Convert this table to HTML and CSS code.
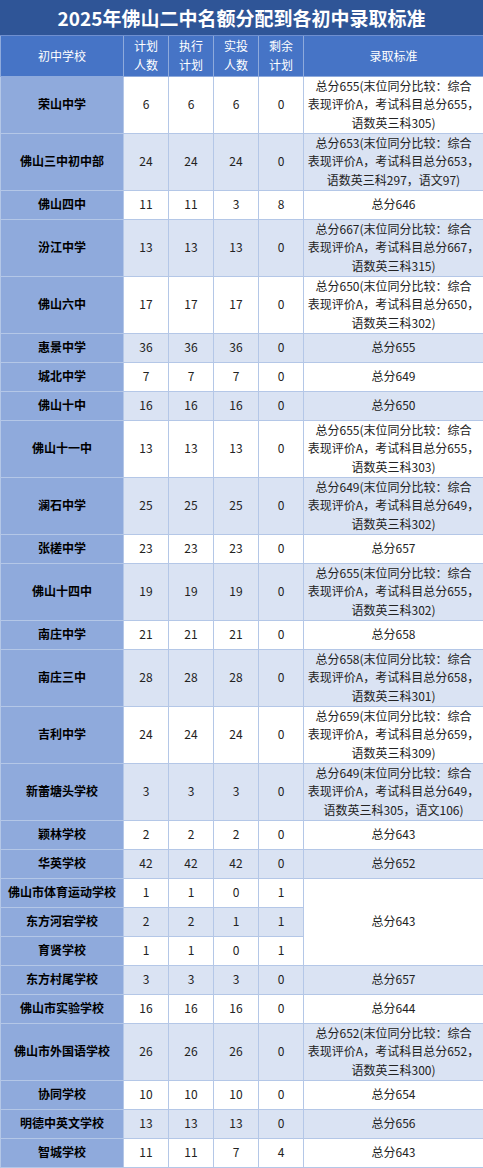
FILE: index.html
```html
<!DOCTYPE html>
<html lang="zh-CN">
<head>
<meta charset="utf-8">
<title>2025年佛山二中名额分配到各初中录取标准</title>
<link rel="stylesheet" href="styles.css">
</head>
<body>
<div class="sheet">
  <div class="title">2025年佛山二中名额分配到各初中录取标准</div>
  <table class="grid">
    <colgroup>
      <col class="c-school"><col class="c-num"><col class="c-num"><col class="c-num"><col class="c-num"><col class="c-rule">
    </colgroup>
    <thead>
      <tr class="head">
        <th>初中学校</th><th>计划<br>人数</th><th>执行<br>计划</th><th>实投<br>人数</th><th>剩余<br>计划</th><th>录取标准</th>
      </tr>
    </thead>
    <tbody>
      <tr class="r3 w"><th>荣山中学</th><td>6</td><td>6</td><td>6</td><td>0</td><td class="rule">总分655(末位同分比较：综合<br>表现评价A，考试科目总分655，<br>语数英三科305)</td></tr>
      <tr class="r3 b"><th>佛山三中初中部</th><td>24</td><td>24</td><td>24</td><td>0</td><td class="rule">总分653(末位同分比较：综合<br>表现评价A，考试科目总分653，<br>语数英三科297，语文97)</td></tr>
      <tr class="r1 w"><th>佛山四中</th><td>11</td><td>11</td><td>3</td><td>8</td><td class="rule">总分646</td></tr>
      <tr class="r3 b"><th>汾江中学</th><td>13</td><td>13</td><td>13</td><td>0</td><td class="rule">总分667(末位同分比较：综合<br>表现评价A，考试科目总分667，<br>语数英三科315)</td></tr>
      <tr class="r3 w"><th>佛山六中</th><td>17</td><td>17</td><td>17</td><td>0</td><td class="rule">总分650(末位同分比较：综合<br>表现评价A，考试科目总分650，<br>语数英三科302)</td></tr>
      <tr class="r1 b"><th>惠景中学</th><td>36</td><td>36</td><td>36</td><td>0</td><td class="rule">总分655</td></tr>
      <tr class="r1 w"><th>城北中学</th><td>7</td><td>7</td><td>7</td><td>0</td><td class="rule">总分649</td></tr>
      <tr class="r1 b"><th>佛山十中</th><td>16</td><td>16</td><td>16</td><td>0</td><td class="rule">总分650</td></tr>
      <tr class="r3 w"><th>佛山十一中</th><td>13</td><td>13</td><td>13</td><td>0</td><td class="rule">总分655(末位同分比较：综合<br>表现评价A，考试科目总分655，<br>语数英三科303)</td></tr>
      <tr class="r3 b"><th>澜石中学</th><td>25</td><td>25</td><td>25</td><td>0</td><td class="rule">总分649(末位同分比较：综合<br>表现评价A，考试科目总分649，<br>语数英三科302)</td></tr>
      <tr class="r1 w"><th>张槎中学</th><td>23</td><td>23</td><td>23</td><td>0</td><td class="rule">总分657</td></tr>
      <tr class="r3 b"><th>佛山十四中</th><td>19</td><td>19</td><td>19</td><td>0</td><td class="rule">总分655(末位同分比较：综合<br>表现评价A，考试科目总分655，<br>语数英三科302)</td></tr>
      <tr class="r1 w"><th>南庄中学</th><td>21</td><td>21</td><td>21</td><td>0</td><td class="rule">总分658</td></tr>
      <tr class="r3 b"><th>南庄三中</th><td>28</td><td>28</td><td>28</td><td>0</td><td class="rule">总分658(末位同分比较：综合<br>表现评价A，考试科目总分658，<br>语数英三科301)</td></tr>
      <tr class="r3 w"><th>吉利中学</th><td>24</td><td>24</td><td>24</td><td>0</td><td class="rule">总分659(末位同分比较：综合<br>表现评价A，考试科目总分659，<br>语数英三科309)</td></tr>
      <tr class="r3 b"><th>新蕾塘头学校</th><td>3</td><td>3</td><td>3</td><td>0</td><td class="rule">总分649(末位同分比较：综合<br>表现评价A，考试科目总分649，<br>语数英三科305，语文106)</td></tr>
      <tr class="r1 w"><th>颖林学校</th><td>2</td><td>2</td><td>2</td><td>0</td><td class="rule">总分643</td></tr>
      <tr class="r1 b"><th>华英学校</th><td>42</td><td>42</td><td>42</td><td>0</td><td class="rule">总分652</td></tr>
      <tr class="r1 w"><th>佛山市体育运动学校</th><td>1</td><td>1</td><td>0</td><td>1</td><td class="rule merged" rowspan="3">总分643</td></tr>
      <tr class="r1 b"><th>东方河宕学校</th><td>2</td><td>2</td><td>1</td><td>1</td></tr>
      <tr class="r1 w"><th>育贤学校</th><td>1</td><td>1</td><td>0</td><td>1</td></tr>
      <tr class="r1 b"><th>东方村尾学校</th><td>3</td><td>3</td><td>3</td><td>0</td><td class="rule">总分657</td></tr>
      <tr class="r1 w"><th>佛山市实验学校</th><td>16</td><td>16</td><td>16</td><td>0</td><td class="rule">总分644</td></tr>
      <tr class="r3 b"><th>佛山市外国语学校</th><td>26</td><td>26</td><td>26</td><td>0</td><td class="rule">总分652(末位同分比较：综合<br>表现评价A，考试科目总分652，<br>语数英三科300)</td></tr>
      <tr class="r1 w"><th>协同学校</th><td>10</td><td>10</td><td>10</td><td>0</td><td class="rule">总分654</td></tr>
      <tr class="r1 b"><th>明德中英文学校</th><td>13</td><td>13</td><td>13</td><td>0</td><td class="rule">总分656</td></tr>
      <tr class="r1 w"><th>智城学校</th><td>11</td><td>11</td><td>7</td><td>4</td><td class="rule">总分643</td></tr>
    </tbody>
  </table>
</div>
</body>
</html>
```

FILE: styles.css
```css
html, body {
  margin: 0;
  padding: 0;
  background: #ffffff;
}

.sheet {
  width: 483px;
  font-family: "Noto Sans CJK SC", "Noto Sans", sans-serif;
}

.title {
  height: 36px;
  line-height: 35px;
  background: #2f5597;
  color: #ffffff;
  font-size: 19px;
  font-weight: bold;
  text-align: center;
  border-bottom: 1px solid #6f8fcf;
  box-sizing: border-box;
}

.grid {
  width: 483px;
  border-collapse: collapse;
  table-layout: fixed;
  font-size: 12px;
}

.c-school { width: 123px; }
.c-num { width: 45px; }
.c-rule { width: 180px; }

.grid th,
.grid td {
  padding: 0;
  text-align: center;
  vertical-align: middle;
  border: 1px solid #b4c7e7;
  line-height: 18.5px;
  white-space: nowrap;
  overflow: hidden;
}

.head {
  height: 40px;
}

.head th {
  background: #4674c6;
  color: #ffffff;
  font-weight: normal;
  border-color: #8eaadc;
  border-top: none;
}

tbody th {
  background: #8faadc;
  color: #000000;
  font-weight: bold;
  border-color: #b4c7e7;
}

tbody td {
  color: #222222;
}

.r1 { height: 29px; }
.r3 { height: 57px; }

.w td { background: #ffffff; }
.b td { background: #dae3f3; }

.grid td.merged { background: #ffffff; }
```
